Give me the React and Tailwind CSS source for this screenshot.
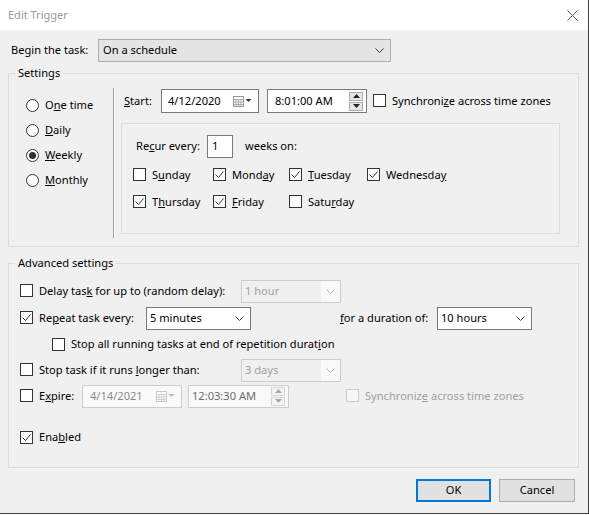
import clsx from 'clsx';

function Check({ checked, disabled }) {
  return (
    <span
      className={clsx(
        'flex h-[13px] w-[13px] shrink-0 items-center justify-center border',
        disabled ? 'border-[#cccccc] bg-[#f7f7f7]' : 'border-[#333333] bg-white'
      )}
    >
      {checked && (
        <svg width="11" height="11" viewBox="0 0 11 11">
          <path d="M1.5 5.5 L4.5 8.5 L9.5 2.5" fill="none" stroke="#333333" strokeWidth="1" />
        </svg>
      )}
    </span>
  );
}

function Radio({ on }) {
  return (
    <span className="flex h-[13px] w-[13px] shrink-0 items-center justify-center rounded-full border border-[#333333] bg-white">
      {on && <span className="h-[7px] w-[7px] rounded-full bg-[#333333]" />}
    </span>
  );
}

function Chevron({ color = '#444444' }) {
  return (
    <svg width="9" height="5" viewBox="0 0 9 5">
      <path d="M0.5 0.5 L4.5 4.5 L8.5 0.5" fill="none" stroke={color} strokeWidth="1" />
    </svg>
  );
}

function Combo({ className, text }) {
  return (
    <div className={clsx('flex h-[23px] items-center justify-between border border-[#7a7a7a] bg-white pl-[3px] pr-[6px]', className)}>
      <span>{text}</span>
      <Chevron />
    </div>
  );
}

function DisabledCombo({ text }) {
  return (
    <div className="flex h-[23px] w-[100px] border border-[#cccccc] bg-[#f9f9f9]">
      <div className="flex w-[79px] items-center bg-[#f0f0f0] pl-[3px] text-[#a0a0a0]">{text}</div>
      <div className="flex flex-1 items-center justify-center">
        <Chevron color="#b0b0b0" />
      </div>
    </div>
  );
}

function CalendarIcon({ disabled }) {
  const grid = disabled ? '#c8c8c8' : '#9a9a9a';
  const tri = disabled ? '#b8b8b8' : '#333333';
  return (
    <svg width="19" height="11" viewBox="0 0 19 11">
      <rect x="0.5" y="0.5" width="10" height="10" fill="#ffffff" stroke={grid} />
      <path d="M0.5 3.5 H10.5 M0.5 6 H10.5 M0.5 8.5 H10.5 M3 3.5 V10.5 M5.5 3.5 V10.5 M8 3.5 V10.5" stroke={grid} strokeWidth="0.8" />
      <path d="M12.5 3 L18.5 3 L15.5 6 Z" fill={tri} />
    </svg>
  );
}

function Spin({ disabled }) {
  const b = disabled ? 'border-[#d6d6d6] bg-[#f3f3f3]' : 'border-[#adadad] bg-[#e5e5e5]';
  const c = disabled ? '#a8a8a8' : '#222222';
  return (
    <div className="flex flex-col gap-[1px]">
      <div className={clsx('flex h-[9px] w-[14px] items-center justify-center border', b)}>
        <svg width="7" height="4" viewBox="0 0 7 4">
          <path d="M0 4 L3.5 0 L7 4 Z" fill={c} />
        </svg>
      </div>
      <div className={clsx('flex h-[9px] w-[14px] items-center justify-center border', b)}>
        <svg width="7" height="4" viewBox="0 0 7 4">
          <path d="M0 0 L7 0 L3.5 4 Z" fill={c} />
        </svg>
      </div>
    </div>
  );
}

function Day({ checked, children, className }) {
  return (
    <div className={clsx('flex items-center gap-[6px]', className)}>
      <Check checked={checked} />
      <span>{children}</span>
    </div>
  );
}

export default function App() {
  return (
    <div className="h-[514px] w-[589px] border-r border-b border-[#3c3c3c] bg-[#f0f0f0] font-['Noto_Sans',sans-serif] text-[11.1px] text-black">
      {/* Title bar */}
      <div className="flex h-[30px] items-center justify-between bg-white pl-[8px] pr-[10px] pt-[1px]">
        <span className="text-[11px] text-[#999999]">Edit Trigger</span>
        <svg width="11" height="11" viewBox="0 0 11 11">
          <path d="M0.5 0.5 L10.5 10.5 M10.5 0.5 L0.5 10.5" stroke="#555555" strokeWidth="1" />
        </svg>
      </div>

      {/* Begin the task */}
      <div className="mt-[9px] flex h-[23px] items-center pl-[11px]">
        <span className="w-[87px]">Begin the task:</span>
        <div className="flex h-[23px] w-[293px] items-center justify-between border border-[#adadad] bg-[#e5e5e5] pl-[4px] pr-[6px]">
          <span>On a schedule</span>
          <Chevron color="#333333" />
        </div>
      </div>

      {/* Settings */}
      <div className="relative ml-[8px] mt-[11px] flex h-[174px] w-[571px] border border-[#dcdcdc]">
        <span className="absolute -top-[9px] left-[6px] bg-[#f0f0f0] px-[3px]">Settings</span>

        <div className="flex w-[104px] flex-col pl-[17px] pt-[19px]">
          <div className="flex h-[25px] items-center gap-[6px]">
            <Radio />
            <span>O<u>n</u>e time</span>
          </div>
          <div className="flex h-[25px] items-center gap-[6px]">
            <Radio />
            <span><u>D</u>aily</span>
          </div>
          <div className="flex h-[25px] items-center gap-[6px]">
            <Radio on />
            <span><u>W</u>eekly</span>
          </div>
          <div className="flex h-[25px] items-center gap-[6px]">
            <Radio />
            <span><u>M</u>onthly</span>
          </div>
        </div>

        <div className="mt-[14px] h-[150px] border-l border-[#a0a0a0] shadow-[inset_1px_0_0_#ffffff]">
          <div className="mt-[1px] flex h-[24px] items-center pl-[10px]">
            <span className="w-[37px]"><u>S</u>tart:</span>
            <div className="flex h-[24px] w-[98px] items-center justify-between border border-[#7a7a7a] bg-white pl-[6px] pr-[6px]">
              <span>4/12/2020</span>
              <CalendarIcon />
            </div>
            <div className="ml-[8px] flex h-[24px] w-[100px] items-center justify-between border border-[#7a7a7a] bg-white pl-[7px] pr-[3px]">
              <span>8:01:00 AM</span>
              <Spin />
            </div>
            <div className="ml-[6px] flex items-center gap-[6px]">
              <Check />
              <span>Synchroni<u>z</u>e across time zones</span>
            </div>
          </div>

          <div className="ml-[7px] mt-[10px] h-[111px] w-[439px] border border-[#dcdcdc] pl-[11px]">
            <div className="mt-[11px] flex h-[23px] items-center">
              <span className="w-[74px] pl-[3px]">Re<u>c</u>ur every:</span>
              <div className="flex h-[23px] w-[26px] items-center border border-[#7a7a7a] bg-white pl-[4px]">1</div>
              <span className="ml-[12px]">weeks on:</span>
            </div>
            <div className="mt-[7px] flex h-[20px] items-center">
              <Day className="w-[80px]">S<u>u</u>nday</Day>
              <Day className="w-[76px]" checked>Mond<u>a</u>y</Day>
              <Day className="w-[78px]" checked><u>T</u>uesday</Day>
              <Day checked>Wednesda<u>y</u></Day>
            </div>
            <div className="mt-[7px] flex h-[20px] items-center">
              <Day className="w-[80px]" checked>T<u>h</u>ursday</Day>
              <Day className="w-[76px]" checked><u>F</u>riday</Day>
              <Day>Satu<u>r</u>day</Day>
            </div>
          </div>
        </div>
      </div>

      {/* Advanced settings */}
      <div className="relative ml-[8px] mt-[16px] h-[205px] w-[571px] border border-[#dcdcdc] pl-[11px]">
        <span className="absolute -top-[9px] left-[6px] bg-[#f0f0f0] px-[3px]">Advanced settings</span>

        <div className="mt-[15px] flex h-[24px] items-center">
          <div className="flex w-[221px] items-center gap-[6px]">
            <Check />
            <span>Delay tas<u>k</u> for up to (random delay):</span>
          </div>
          <DisabledCombo text="1 hour" />
        </div>

        <div className="mt-[3px] flex h-[24px] items-center">
          <div className="flex w-[126px] items-center gap-[6px]">
            <Check checked />
            <span>Re<u>p</u>eat task every:</span>
          </div>
          <Combo className="w-[105px]" text="5 minutes" />
          <span className="ml-[89px] w-[97px]"><u>f</u>or a duration of:</span>
          <Combo className="w-[95px]" text="10 hours" />
        </div>

        <div className="mt-[2px] flex h-[24px] items-center gap-[6px] pl-[32px]">
          <Check />
          <span>Stop all running tasks at end of repetition durat<u>i</u>on</span>
        </div>

        <div className="mt-[2px] flex h-[24px] items-center">
          <div className="flex w-[221px] items-center gap-[6px]">
            <Check />
            <span>Stop task if it runs <u>l</u>onger than:</span>
          </div>
          <DisabledCombo text="3 days" />
        </div>

        <div className="mt-[2px] flex h-[24px] items-center">
          <div className="flex w-[62px] items-center gap-[6px]">
            <Check />
            <span>E<u>x</u>pire:</span>
          </div>
          <div className="flex h-[23px] w-[100px] items-center justify-between border border-[#cccccc] bg-[#f9f9f9] pl-[7px] pr-[6px] text-[#8a8a8a]">
            <span>4/14/2021</span>
            <CalendarIcon disabled />
          </div>
          <div className="ml-[6px] flex h-[23px] w-[101px] items-center justify-between border border-[#cccccc] bg-[#f9f9f9] pl-[3px] pr-[3px] text-[#6d6d6d]">
            <span>12:03:30 AM</span>
            <Spin disabled />
          </div>
          <div className="ml-[57px] flex items-center gap-[6px] text-[#a0a0a0]">
            <Check disabled />
            <span>Synchroniz<u>e</u> across time zones</span>
          </div>
        </div>

        <div className="mt-[17px] flex h-[24px] items-center gap-[6px]">
          <Check checked />
          <span>Ena<u>b</u>led</span>
        </div>
      </div>

      {/* Buttons */}
      <div className="mt-[11px] flex justify-end gap-[8px] pr-[13px]">
        <button className="flex h-[23px] w-[75px] items-center justify-center border-2 border-[#0078d7] bg-[#e1e1e1]">OK</button>
        <button className="flex h-[23px] w-[76px] items-center justify-center border border-[#adadad] bg-[#e1e1e1]">Cancel</button>
      </div>
    </div>
  );
}
